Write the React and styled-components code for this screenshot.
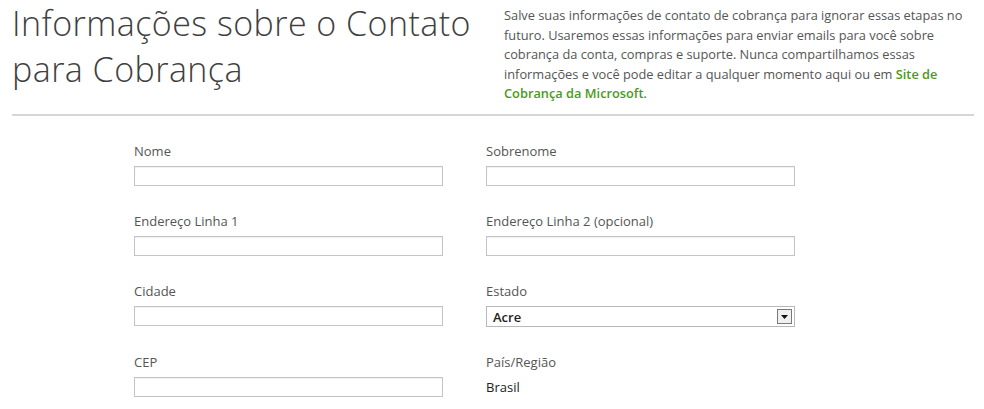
import React from "react";
import styled, { createGlobalStyle } from "styled-components";

const GlobalStyle = createGlobalStyle`
  body {
    margin: 0;
    background: #fff;
    font-family: "Open Sans", "Noto Sans", sans-serif;
  }
`;

const Page = styled.div`
  width: 984px;
  height: 409px;
  overflow: hidden;
  padding: 0 10px 0 12px;
  box-sizing: border-box;
`;

const Header = styled.div`
  display: flex;
  align-items: flex-start;
  justify-content: space-between;
  border-bottom: 2px solid #d6d6d6;
  height: 116px;
  box-sizing: border-box;
`;

const Title = styled.h1`
  margin: 0;
  padding-top: 0;
  width: 490px;
  font-size: 34px;
  font-weight: 300;
  line-height: 46px;
  color: #3f3f3f;
  letter-spacing: 0.45px;
  white-space: nowrap;
`;

const Intro = styled.p`
  margin: 6px 0 0;
  width: 470px;
  font-size: 12.8px;
  line-height: 19.6px;
  color: #555;
`;

const Link = styled.a`
  color: #4a9a1c;
  font-weight: 600;
  text-decoration: none;
`;

const Form = styled.div`
  display: grid;
  grid-template-columns: 310px 310px;
  column-gap: 42px;
  row-gap: 27px;
  padding: 27px 0 0 122px;
`;

const Field = styled.div`
  display: flex;
  flex-direction: column;
`;

const Label = styled.label`
  font-size: 13px;
  line-height: 17px;
  color: #555;
  margin-bottom: 6px;
`;

const Input = styled.input`
  box-sizing: border-box;
  width: 309px;
  height: 20px;
  border: 1px solid #c4c4c4;
  box-shadow: inset 0 1px 1px rgba(0, 0, 0, 0.06);
  padding: 0 4px;
  margin: 0;
`;

const Select = styled.div`
  box-sizing: border-box;
  width: 309px;
  height: 21px;
  border: 1px solid #b8b8b8;
  display: flex;
  align-items: center;
  justify-content: space-between;
  padding: 0 2px 0 6px;
  font-size: 13px;
  font-weight: 600;
  color: #222;
`;

const ArrowBox = styled.span`
  box-sizing: border-box;
  width: 15px;
  height: 15px;
  border: 1px solid #7a7a7a;
  background: #f0f0f0;
  display: flex;
  align-items: center;
  justify-content: center;
`;

const Value = styled.div`
  font-size: 13px;
  line-height: 20px;
  color: #222;
`;

const fields = [
  { label: "Nome" },
  { label: "Sobrenome" },
  { label: "Endereço Linha 1" },
  { label: "Endereço Linha 2 (opcional)" },
  { label: "Cidade" },
  { label: "Estado", select: "Acre" },
  { label: "CEP" },
  { label: "País/Região", value: "Brasil" },
];

export default function App() {
  return (
    <>
      <GlobalStyle />
      <Page>
        <Header>
          <Title>
            Informações sobre o Contato
            <br />
            para Cobrança
          </Title>
          <Intro>
            Salve suas informações de contato de cobrança para ignorar essas etapas no
            futuro. Usaremos essas informações para enviar emails para você sobre
            cobrança da conta, compras e suporte. Nunca compartilhamos essas
            informações e você pode editar a qualquer momento aqui ou em{" "}
            <Link href="#">Site de Cobrança da Microsoft</Link>.
          </Intro>
        </Header>
        <Form>
          {fields.map((f) => (
            <Field key={f.label}>
              <Label>{f.label}</Label>
              {f.select ? (
                <Select>
                  {f.select}
                  <ArrowBox>
                    <svg width="7" height="4" viewBox="0 0 7 4">
                      <path d="M0 0h7L3.5 4z" fill="#111" />
                    </svg>
                  </ArrowBox>
                </Select>
              ) : f.value ? (
                <Value>{f.value}</Value>
              ) : (
                <Input type="text" />
              )}
            </Field>
          ))}
        </Form>
      </Page>
    </>
  );
}
